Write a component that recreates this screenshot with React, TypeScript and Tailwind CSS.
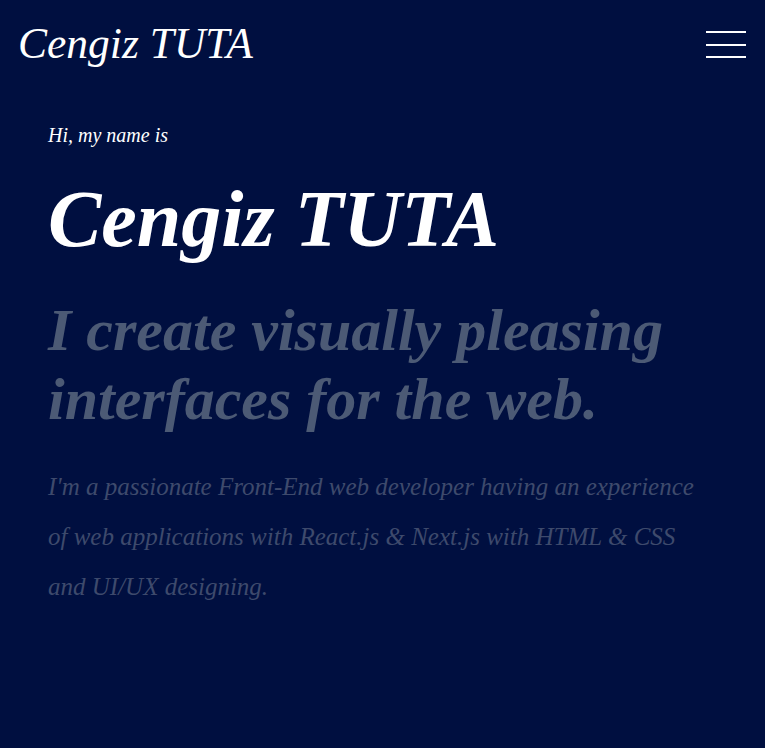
export default function App() {
  return (
    <div className="min-h-[748px] w-full bg-[#000f40] text-white" style={{ fontFamily: '"Liberation Serif", "Times New Roman", serif' }}>
      <header className="flex items-start justify-between pl-[18px] pr-[19px] pt-[17px]">
        <div className="text-[43.5px] italic leading-[52px]">Cengiz TUTA</div>
        <button className="mt-[14px] flex flex-col gap-[10.5px]" aria-label="menu">
          <span className="block h-[2px] w-10 bg-white" />
          <span className="block h-[2px] w-10 bg-white" />
          <span className="block h-[2px] w-10 bg-white" />
        </button>
      </header>
      <main className="px-12 pt-[54px]">
        <p className="text-[20px] italic leading-[24px]">Hi, my name is</p>
        <h1 className="mt-[26px] text-[80px] font-bold italic leading-[92px]">Cengiz TUTA</h1>
        <h2 className="mt-[31px] text-[60px] font-bold italic leading-[69px] text-[#4c5a75]">
          I create visually pleasing
          <br />
          interfaces for the web.
        </h2>
        <p className="mt-[28px] max-w-[660px] text-[25px] italic leading-[50px] text-[#3e4a6c]">
          I'm a passionate Front-End web developer having an experience of web applications with React.js &amp; Next.js with HTML &amp; CSS and UI/UX designing.
        </p>
      </main>
    </div>
  );
}
